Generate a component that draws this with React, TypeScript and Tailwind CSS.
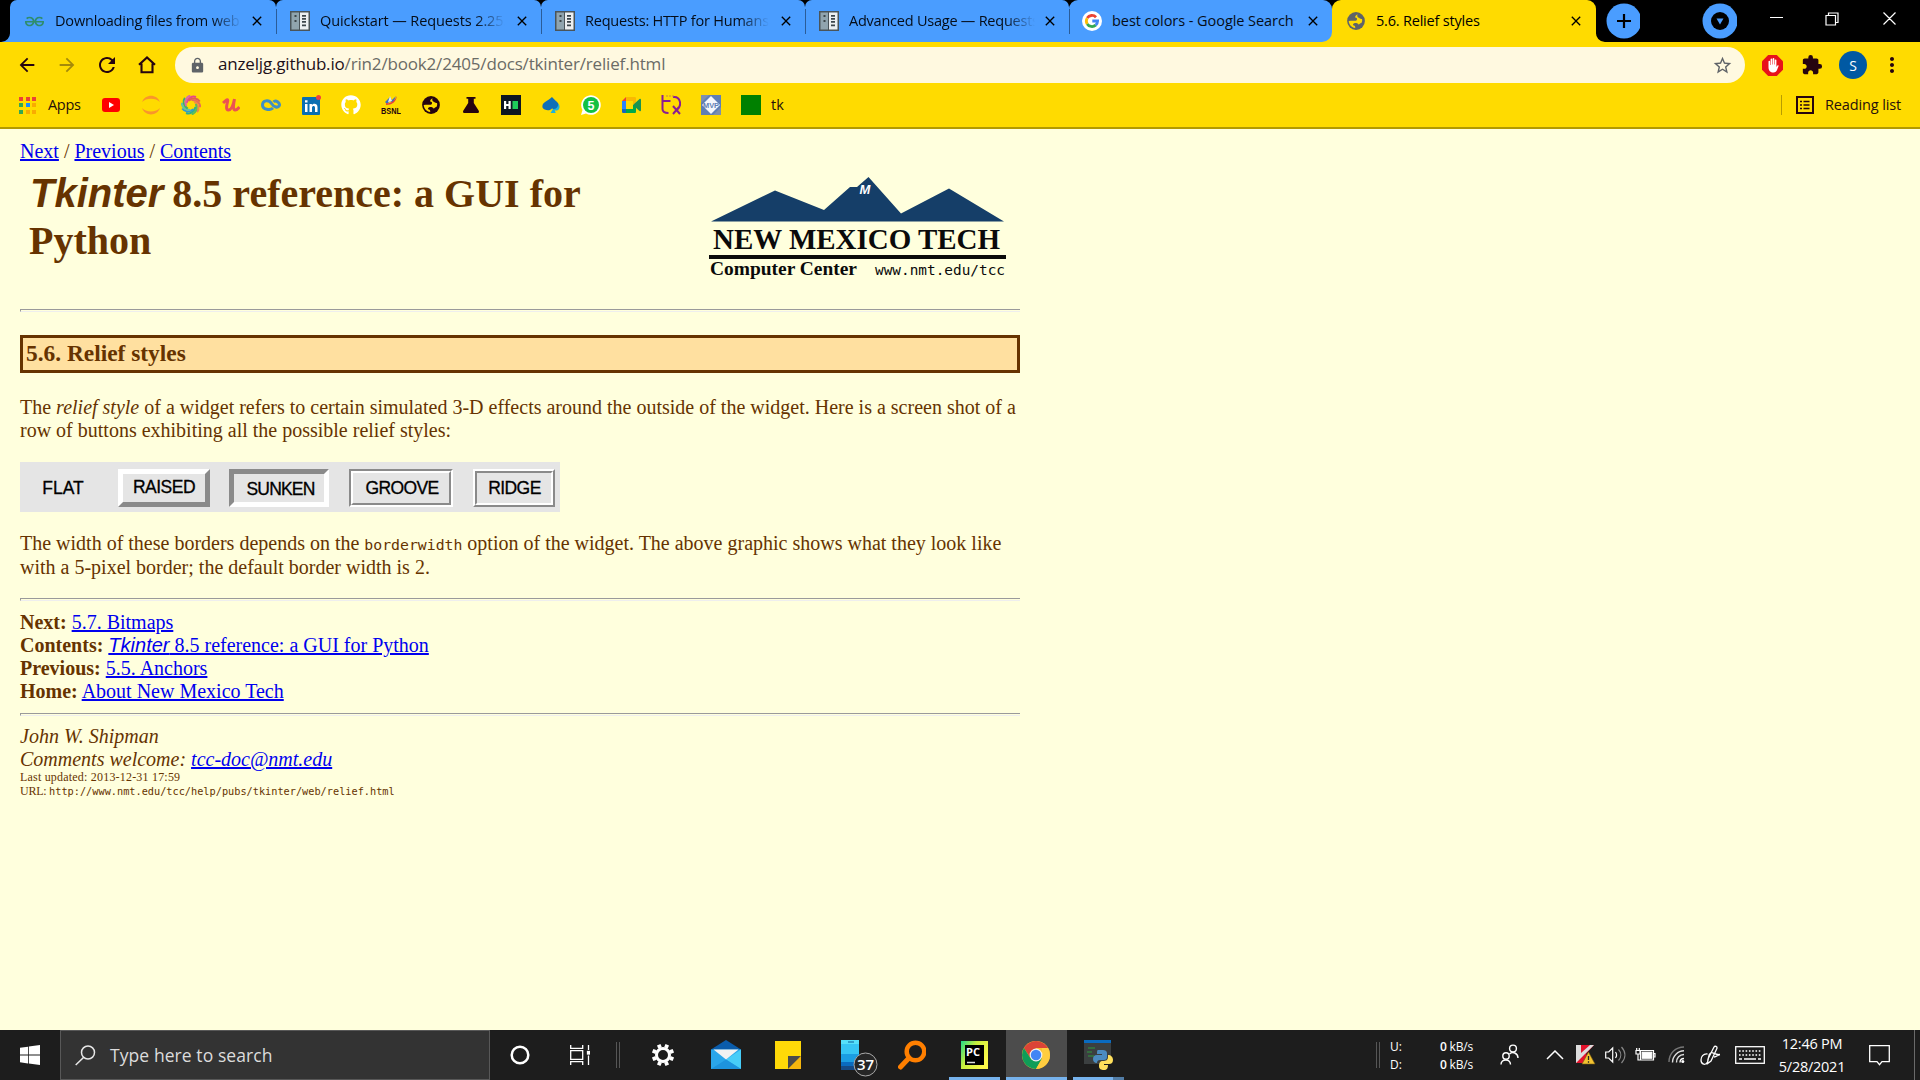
import React from "react";
import { MdArrowBack, MdArrowForward, MdRefresh, MdLock, MdStarBorder, MdExtension, MdMoreVert, MdClose } from "react-icons/md";
import { FaGithub } from "react-icons/fa";
import { SiGeeksforgeeks } from "react-icons/si";

const UI = "font-['Open_Sans','Noto_Sans',sans-serif]";

function DocsIcon() {
  return (
    <svg width="20" height="20" viewBox="0 0 20 20">
      <rect x="0" y="0" width="20" height="20" fill="#4a5459" />
      <rect x="1.5" y="1.5" width="7.5" height="17" fill="#90a4ae" />
      <rect x="10" y="1.5" width="8.5" height="17" fill="#eceff1" />
      <path d="M4.500 4h2v2h-2zM4.500 9h2v2h-2zM12 4h4v1.800h-4zM12 7h4v1.800h-4zM12 10h4v1.800h-4zM12 13.500h4v1.800h-4z" fill="#3c464b" />
    </svg>
  );
}

function GoogleIcon() {
  return (
    <svg width="20" height="20" viewBox="0 0 20 20">
      <circle cx="10" cy="10" r="10" fill="#fff" />
      <g fill="none" strokeWidth="2.800">
        <path d="M14 6.200A5.600 5.600 0 0 0 5.200 7.100" stroke="#ea4335" />
        <path d="M5.200 7.100a5.600 5.600 0 0 0 0 5.800" stroke="#fbbc05" />
        <path d="M5.200 12.900a5.600 5.600 0 0 0 8.500 1.200" stroke="#34a853" />
        <path d="M13.700 14.100A5.600 5.600 0 0 0 15.600 10H10.300" stroke="#4285f4" />
      </g>
    </svg>
  );
}

function Globe({ color }: { color: string }) {
  return (
    <svg width="18" height="18" viewBox="0 0 18 18">
      <circle cx="9" cy="9" r="8.900" fill={color} />
      <path d="M10.500 2.200C9 3 8 4.200 8.200 5.500c1.600 0 2.300 1 1.600 2.400-.8 1-2.600.8-3.800.8-1.500 0-3.200.1-4.300.2.200 3.500 3 6.700 6.500 7 .3-1.700-.7-2.200-2.200-2.600-.2-1.600.7-2.500 2.300-2.400 1.500.1 3.300.3 3.400 1.800.8-.7 1.200-1.800 2.700-1.800.8-1.300 1-2.600.6-4-1.400.3-2.200-.3-3-1.100-1.500-.2-2.200-2-1.500-3.600z" fill="#ffdb00" />
    </svg>
  );
}

const tabs = [
  { w: "w-[266px]", pad: "pl-[15px]", title: "Downloading files from web", tw: "w-[187px]", track: "tracking-[-0.170px]", icon: <SiGeeksforgeeks size={19} color="#2f8d6c" /> },
  { w: "w-[265px]", pad: "pl-[14px]", title: "Quickstart — Requests 2.25.", tw: "w-[185px]", track: "tracking-[-0.100px]", icon: <DocsIcon /> },
  { w: "w-[264px]", pad: "pl-[14px]", title: "Requests: HTTP for Humans™", tw: "w-[184px]", track: "tracking-[-0.200px]", icon: <DocsIcon /> },
  { w: "w-[264px]", pad: "pl-[14px]", title: "Advanced Usage — Requests", tw: "w-[186px]", track: "tracking-[-0.230px]", icon: <DocsIcon /> },
  { w: "w-[263px]", pad: "pl-[13px]", title: "best colors - Google Search", tw: "w-[190px]", track: "tracking-[-0.060px]", icon: <GoogleIcon /> },
];

function TabStrip() {
  return (
    <div className="flex h-[42px] bg-black pl-[10px]">
      {tabs.map((t, i) => (
        <div key={t.title} className={`${t.w} ${i === 4 ? "bg-[#ffdb00]" : "bg-black"} relative h-[42px] shrink-0`}>
          {i === 0 && (
            <svg className="absolute bottom-0 -left-[9px]" width="10" height="10"><path d="M10 0v10H0A9 9 0 0 0 9 0z" fill="#4a9dff" /></svg>
          )}
          {i === 4 && <div className="absolute top-0 left-0 size-[10px] bg-black" />}
          {i === 4 && <div className="absolute top-0 right-0 size-[10px] bg-black" />}
          <div className={`${i === 4 ? "rounded-t-[9px] rounded-br-[10px]" : "rounded-t-[7px]"} ${t.pad} relative flex h-full items-center bg-[#4a9dff]`}>
            {i > 0 && <div className="absolute left-0 top-[9px] h-[25px] w-px bg-[#2a5c98]" />}
            <div className="flex w-[20px] justify-start">{t.icon}</div>
            <div className={`${t.tw} ${t.track} ml-[10px] overflow-hidden whitespace-nowrap text-[14.500px] text-[#050d18] ${i < 4 ? "[mask-image:linear-gradient(to_right,black_84%,transparent)]" : ""}`}>{t.title}</div>
            <MdClose className="absolute right-[11px] text-black" size={16} />
          </div>
        </div>
      ))}
      <div className="relative h-[42px] w-[264px] shrink-0 bg-[#4a9dff]">
        <div className="absolute left-0 top-0 h-[10px] w-full bg-black" />
        <div className="absolute right-0 top-0 h-[10px] w-[10px] bg-black" />
        <div className="relative flex h-full items-center rounded-t-[9px] bg-[#ffdb00] pl-[15px]">
          <Globe color="#5f6368" />
          <div className="ml-[11px] text-[14.500px] tracking-[-0.200px] text-black">5.6. Relief styles</div>
          <MdClose className="absolute right-[12px] text-black" size={16} />
        </div>
        <svg className="absolute bottom-0 -right-[9px]" width="10" height="10"><path d="M0 0v10h10A9 9 0 0 1 1 0z" fill="#ffdb00" /></svg>
      </div>
      <svg className="ml-[10px] mt-[3px]" width="36" height="36"><circle cx="18" cy="18" r="17.500" fill="#4a9dff" /><path d="M18 11v14M11 18h14" stroke="#000" strokeWidth="2.200" /></svg>
      <svg className="ml-[62px] mt-[3px]" width="36" height="36"><circle cx="18" cy="18" r="17.500" fill="#4a9dff" /><circle cx="18" cy="18" r="9" fill="#000" /><path d="M14.500 15.500h7L18 21.500z" fill="#4a9dff" /></svg>
      <svg className="ml-[31px]" width="160" height="42" fill="none" stroke="#fff" strokeWidth="1.200">
        <path d="M2 17.500h13M58 15.500h9.500v9.500H58zM60.500 15.500v-2.500H70v9.500h-2.500M115.500 12.500l12 12M127.500 12.500l-12 12" />
      </svg>
    </div>
  );
}

function Toolbar() {
  return (
    <div className="flex h-[44px] items-center bg-[#ffdb00] pl-[16px] pt-[2px]">
      <div className="flex w-[159px] items-center gap-[18px] text-[#26040f]">
        <MdArrowBack size={22} />
        <MdArrowForward size={22} className="text-[#a58a0a]" />
        <MdRefresh size={24} className="-mx-px" />
        <svg width="22" height="22" fill="none" stroke="#26040f" strokeWidth="2.100"><path d="M3 10.800L11 3.500l8 7.300M5.500 9.500v8.800h11V9.500" /></svg>
      </div>
      <div className="flex h-[36px] w-[1570px] items-center rounded-full bg-[#fff9e0] pl-[14px] pr-[12px]">
        <MdLock size={17} className="text-[#5f6368]" />
        <div className="relative -top-px ml-[12px] flex-1 text-[17px] tracking-[-0.170px] text-[#6b6b66]"><span className="text-[#1d1018]">anzeljg.github.io</span>/rin2/book2/2405/docs/tkinter/relief.html</div>
        <MdStarBorder size={21} className="text-[#5f6368]" />
      </div>
      <div className="flex flex-1 items-center pl-[17px]">
        <svg width="21" height="21" viewBox="0 0 21 21">
          <path d="M6.200 0h8.600L21 6.200v8.600L14.800 21H6.200L0 14.800V6.200z" fill="#e8121a" />
          <path d="M6.500 12V6.500a.8.800 0 0 1 1.600 0V10h.5V4.300a.8.800 0 0 1 1.600 0V9.500h.5V3.800a.8.800 0 0 1 1.600 0v5.700h.5V5.200a.8.800 0 0 1 1.600 0V12l1-1.500c.5-.6 1.400-.2 1.200.5l-1.600 4c-.6 1.500-1.600 2.500-3.500 2.500-3 0-5-1.500-5-5.500z" fill="#fff" />
        </svg>
        <MdExtension size={22} className="ml-[18px] text-[#26040f]" />
        <div className="ml-[16px] flex size-[28px] items-center justify-center rounded-full bg-[#0059a3] text-[14px] text-white">S</div>
        <MdMoreVert size={24} className="ml-[13px] text-[#26040f]" />
      </div>
    </div>
  );
}

const bookmarks: React.ReactNode[] = [
  <svg width="18" height="14"><rect width="18" height="14" rx="3" fill="#f00" /><path d="M7 4l5 3-5 3z" fill="#fff" /></svg>,
  <svg width="20" height="20" fill="#f9952b"><path d="M1 7C4-1.500 16-1.500 19 7 15 2.500 5 2.500 1 7zM1 13c3 8.500 15 8.500 18 0-4 4.500-14 4.500-18 0z" /></svg>,
  <svg width="20" height="20" viewBox="0 0 20 20" fill="none" strokeWidth="2">
    {["#e8458b", "#e0604f", "#e86a5a", "#ef8a4a", "#5bbd5a", "#2fae8c", "#2f9ad0", "#62c3a4", "#3fae6a", "#d86aa8"].map((c, i) => (
      <path key={c} d="M5.500 8C7 3 11 .500 15 2" stroke={c} transform={`rotate(${i * 36} 10 10)`} />
    ))}
  </svg>,
  <svg width="18" height="18" viewBox="0 0 18 18" fill="none" stroke="#ec5252" strokeWidth="3"><path d="M1 7C4 4 6.500 2 5.500 6c-.8 3-2 8 1 8 3.500 0 5-6 6-11-1 5-2 10.500.5 11 1.800.2 3-1 4.500-3" /></svg>,
  <svg width="20" height="12" viewBox="0 0 20 12" fill="none" stroke="#3f8fc4" strokeWidth="3"><path d="M12 9C9.500 11.500 1.500 11 1.500 6S8 .5 10.500 4.500 17 9 18.200 6.800 15 .2 12.500 3" /></svg>,
  <svg width="20" height="20" viewBox="0 0 20 20"><rect x="1" y="2" width="18" height="18" rx="1" fill="#0a6fb3" /><path d="M4 9h2.500v8H4zM4 5.300h2.500v2.200H4zM8.500 9h2.400v1.200c1.600-2.300 5.600-1.600 5.600 1.900V17H14v-4.300c0-2.300-3-2-3 0V17H8.500z" fill="#fff" /><circle cx="17.500" cy="2.500" r="2.500" fill="#f0413c" /></svg>,
  <FaGithub size={20} color="#fff" />,
  <svg width="20" height="22" viewBox="0 0 20 22"><path d="M4 8l5-5 2 3 4-4-3 7-3-2-3 3z" fill="#3b6fc0" /><path d="M5 9c3 1 8-1 11-7-1 6-5 9-11 9z" fill="#e5413c" /><path d="M9 2l2 5-4 1z" fill="#eee" /><text x="0" y="20" textLength="20" lengthAdjust="spacingAndGlyphs" fontFamily="Liberation Sans" fontWeight="700" fontSize="8.500" fill="#26040f">BSNL</text></svg>,
  <Globe color="#26040f" />,
  <svg width="16" height="16" fill="#26040f"><path d="M3.500 0h9v1.800h-1.700V6L15.600 13.500c.8 1.300.2 2.500-1.100 2.500h-13c-1.300 0-1.900-1.200-1.100-2.500L5.200 6V1.800H3.500z" /></svg>,
  <svg width="20" height="20"><rect width="20" height="20" fill="#0e1621" /><path d="M3 6h2.200v3h2.300V6h2.200v8H7.500v-3H5.200v3H3z" fill="#fff" /><path d="M11.500 6H17v8h-5.500z" fill="#1ecb5b" /></svg>,
  <svg width="18" height="18" viewBox="0 0 18 18"><path d="M10 1C12 4 17 6 17 10.500c-1 3-5 3-7 2-2 3-8 2-9.500-1C-.5 6 6 5 10 1z" fill="#0f6fb8" /><path d="M16.500 7.500c2 3 1 6.500-1.500 7-1 .3-1.800 0-2.300-.5l1 3H8.500l2.500-4c2.500.5 5-1.500 5.500-5.500z" fill="#1fb3dd" /></svg>,
  <svg width="20" height="20" viewBox="0 0 20 20"><path d="M0 20l1.500-5A9.800 9.800 0 1 1 5 18.500z" fill="#fff" /><circle cx="10" cy="10" r="8" fill="#12c143" /><text x="10" y="14.500" textAnchor="middle" fontFamily="Liberation Sans" fontWeight="700" fontSize="12.500" fill="#fff">5</text></svg>,
  <svg width="19" height="16" viewBox="0 0 19 16"><path d="M0 4l4-4v4z" fill="#ea4335" /><path d="M4 0h8.500c1 0 1.500.5 1.500 1.500V8l-3-1V4H4z" fill="#fbb900" /><path d="M0 4h4v8H0z" fill="#2a84fc" /><path d="M0 12h4v4H1.500C.5 16 0 15.500 0 14.500z" fill="#1565c0" /><path d="M4 12h7V8h3v6.500c0 1-.5 1.500-1.500 1.500H4z" fill="#00a94b" /><path d="M11 8l6.500-6c.7-.5 1.500-.2 1.500.7v10.600c0 1-.8 1.200-1.500.7z" fill="#1c9350" /></svg>,
  <svg width="20" height="20" viewBox="0 0 20 20" fill="none" stroke="#8a1d93" strokeWidth="2"><path d="M1.500 0v14c0 2.500 2 4 6 4M1.500 6h8M12 2c8-1 9 9 4 13M12 11l7 8M18 12l-6 7" /><path d="M5 1h8" strokeDasharray="2 1" strokeWidth="1.200" stroke="#c98a40" /></svg>,
  <svg width="20" height="20" viewBox="0 0 20 20"><rect width="20" height="20" fill="#5f7fb5" /><path d="M0 0h8L0 8zM20 20h-8l8-8z" fill="#7d8fae" /><path d="M10 1l9 9-9 9-9-9z" fill="#f4f7fc" /><text x="10" y="13" textAnchor="middle" textLength="16" lengthAdjust="spacingAndGlyphs" fontFamily="Liberation Sans" fontWeight="700" fontSize="8" fill="#5f7fb5">MVP</text></svg>,
  <svg width="20" height="20"><rect width="20" height="20" fill="#008000" /></svg>,
];

function BookmarkBar() {
  const dots = ["#ea4335", "#ea4335", "#ea4335", "#34a853", "#1a8cff", "#f9ab00", "#34a853", "#f9ab00", "#f9ab00"];
  return (
    <div className="flex h-[43px] items-center border-b-2 border-[#b39a00] bg-[#ffdb00] pl-[19px] pb-[3px] text-[14.500px] text-[#26100a]">
      <div className="grid grid-cols-3 gap-[2.500px]">
        {dots.map((c, i) => <div key={i} className="size-[4px]" style={{ backgroundColor: c }} />)}
      </div>
      <div className="ml-[12px] w-[43px] tracking-[-0.300px]">Apps</div>
      {bookmarks.map((b, i) => <div key={i} className="flex w-[40px] shrink-0 justify-center">{b}</div>)}
      <div className="">tk</div>
      <div className="ml-auto h-[20px] w-px bg-[#b89d00]" />
      <svg className="ml-[14px]" width="18" height="18" fill="none" stroke="#26040f"><rect x="1" y="1" width="16" height="16" strokeWidth="2" /><path d="M4 5.500h2M7.500 5.500h6M4 9h2M7.500 9h6M4 12.500h2M7.500 12.500h6" strokeWidth="1.600" /></svg>
      <div className="ml-[11px] w-[95px] tracking-[-0.120px]">Reading list</div>
    </div>
  );
}

function Link({ children }: { children: React.ReactNode }) {
  return <a className="text-[#0000ee] underline">{children}</a>;
}

function Rule() {
  return <div className="h-[3px] border-t border-b border-l border-t-[#9a9a9a] border-b-[#eeeeee] border-l-[#9a9a9a]" />;
}

function NmtLogo() {
  return (
    <svg width="300" height="110" viewBox="0 0 300 110" className="shrink-0">
      <path d="M2 45.500L66 14.500 115 34 141 11h7l11.500-10L192 37.500 240 12.500 295 45.500z" fill="#153e68" />
      <text x="150.500" y="17.500" fontFamily="Liberation Sans" fontStyle="italic" fontWeight="700" fontSize="13" fill="#fff">M</text>
      <g fill="#0a0a0a">
        <text x="4" y="72.500" textLength="287" lengthAdjust="spacingAndGlyphs" fontFamily="Liberation Serif" fontWeight="700" fontSize="30">NEW MEXICO TECH</text>
        <rect x="0" y="79" width="297" height="4" />
        <text x="1" y="98.500" textLength="147" lengthAdjust="spacingAndGlyphs" fontFamily="Liberation Serif" fontWeight="700" fontSize="18.500">Computer Center</text>
        <text x="166" y="98.500" textLength="130" lengthAdjust="spacingAndGlyphs" fontFamily="DejaVu Sans Mono" fontSize="14.500">www.nmt.edu/tcc</text>
      </g>
    </svg>
  );
}

function ReliefStrip() {
  return (
    <div className="flex h-[50px] w-[540px] bg-[#e5e5e5] pt-[7px] font-['Liberation_Sans',sans-serif] text-[17.500px] text-black [-webkit-text-stroke:0.3px_black]">
      <div className="flex h-[38px] w-[86px] items-center justify-center">FLAT</div>
      <div className="ml-[12px] flex h-[38px] w-[92px] items-center justify-center border-[5px] border-b-[#8a8a8a] border-l-white border-r-[#8a8a8a] border-t-white pb-[2px] tracking-[-0.500px]">RAISED</div>
      <div className="ml-[19px] flex h-[38px] w-[100px] items-center justify-center border-[5px] border-b-white border-l-[#8a8a8a] border-r-white border-t-[#8a8a8a] pl-[3px] pt-[2px] tracking-[-0.800px]">SUNKEN</div>
      <div className="ml-[20px] h-[38px] w-[104px] border-2 border-b-white border-l-[#8a8a8a] border-r-white border-t-[#8a8a8a]">
        <div className="flex h-full items-center justify-center border-2 border-b-[#8a8a8a] border-l-white border-r-[#8a8a8a] border-t-white pl-[2px] tracking-[-0.600px]">GROOVE</div>
      </div>
      <div className="ml-[20px] h-[38px] w-[82px] border-2 border-b-[#8a8a8a] border-l-white border-r-[#8a8a8a] border-t-white">
        <div className="flex h-full items-center justify-center border-2 border-b-white border-l-[#8a8a8a] border-r-white border-t-[#8a8a8a] pl-px tracking-[-0.600px]">RIDGE</div>
      </div>
    </div>
  );
}

function Article() {
  return (
    <div className="h-[901px] bg-[#ffffdd] pl-[20px] pt-[11px] font-['Liberation_Serif',serif] text-[20px] leading-[23px] text-[#663300]">
      <div className="w-[1000px]">
        <div><Link>Next</Link> / <Link>Previous</Link> / <Link>Contents</Link></div>
        <div className="flex h-[146px] justify-between pl-[9px] pr-[11px]">
          <h1 className="w-[620px] pt-[7px] text-[40px] font-bold leading-[47px]"><span className="pl-px font-['Liberation_Sans',sans-serif] italic">Tkinter</span><span className="-ml-px"> 8.5 reference: a GUI for Python</span></h1>
          <div className="pt-[13px]"><NmtLogo /></div>
        </div>
        <Rule />
        <h2 className="mt-[23px] flex h-[38px] items-center border-[3px] border-[#663300] bg-[#ffe0a0] pb-[2px] pl-[3px] text-[23.400px] font-bold">5.6. Relief styles</h2>
        <p className="mt-[23px]">The <i>relief style</i> of a widget refers to certain simulated 3-D effects around the outside of the widget. Here is a screen shot of a row of buttons exhibiting all the possible relief styles:</p>
        <div className="mt-[20px]"><ReliefStrip /></div>
        <p className="mt-[20px]">The width of these borders depends on the <span className="font-['DejaVu_Sans_Mono',monospace] text-[14.800px]">borderwidth</span> option of the widget. The above graphic shows what they look like with a 5-pixel border; the default border width is 2.</p>
        <div className="mt-[19px]"><Rule /></div>
        <div className="mt-[10px]">
          <div><b>Next:</b> <Link>5.7. Bitmaps</Link></div>
          <div><b>Contents:</b> <Link><span className="font-['Liberation_Sans',sans-serif] italic">Tkinter</span> 8.5 reference: a GUI for Python</Link></div>
          <div><b>Previous:</b> <Link>5.5. Anchors</Link></div>
          <div><b>Home:</b> <Link>About New Mexico Tech</Link></div>
        </div>
        <div className="mt-[10px]"><Rule /></div>
        <div className="mt-[9px] italic">
          <div>John W. Shipman</div>
          <div>Comments welcome: <Link>tcc-doc@nmt.edu</Link></div>
        </div>
        <div className="-mt-px text-[12px] leading-[14px]">
          <div className="tracking-[0.200px]">Last updated: 2013-12-31 17:59</div>
          <div><span className="tracking-[-0.250px]">URL: </span><span className="font-['DejaVu_Sans_Mono',monospace] text-[10.250px]">http://www.nmt.edu/tcc/help/pubs/tkinter/web/relief.html</span></div>
        </div>
      </div>
    </div>
  );
}

function TaskButton({ w, line, active, children }: { w: string; line?: string; active?: boolean; children: React.ReactNode }) {
  return (
    <div className={`${w} ${active ? "bg-[#4c4c4c]" : ""} relative flex h-[50px] shrink-0 items-center justify-center`}>
      {children}
      {line && <div className={`${line} absolute bottom-0 h-[3px] bg-[#76b2ec]`} />}
    </div>
  );
}

function Taskbar() {
  return (
    <div className="flex h-[50px] items-center bg-[#1d1d1d] text-white">
      <div className="flex w-[60px] justify-center">
        <svg width="20" height="20" viewBox="0 0 20 20" fill="#fff"><path d="M0 2.800L8 1.700V9.600H0zM8.800 1.600L20 0v9.600H8.800zM0 10.400h8v8L0 17.300zM8.800 10.400H20V20L8.800 18.500z" /></svg>
      </div>
      <div className="flex h-[50px] w-[430px] items-center border border-[#585858] bg-[#333333] pl-[14px]">
        <svg width="21" height="21" fill="none" stroke="#e8e8e8" strokeWidth="1.500"><circle cx="13" cy="7.500" r="6.500" /><path d="M8.500 12.500L.7 20" /></svg>
        <span className="ml-[14px] text-[17.500px] tracking-[0.080px] text-[#dcdcdc]">Type here to search</span>
      </div>
      <TaskButton w="w-[60px]"><svg width="20" height="20" fill="none" stroke="#fff" strokeWidth="2.500"><circle cx="10" cy="10" r="8.300" /></svg></TaskButton>
      <TaskButton w="w-[60px]">
        <svg width="20" height="20" fill="none" stroke="#fff" strokeWidth="1.300"><path d="M.7 0v3.300h12V0M.7 20v-3.300h12V20M.7 5.700h12v8.600H.7zM18.500 0v5M18.500 10.500V20" /><rect x="17.500" y="6.500" width="2" height="2.500" fill="#fff" /></svg>
      </TaskButton>
      <div className="ml-[6px] h-[26px] w-[4px] border-x border-[#565656]" />
      <TaskButton w="w-[85px]">
        <svg width="24" height="24" viewBox="0 0 24 24" fill="none" stroke="#fff"><circle cx="12" cy="12" r="6.500" strokeWidth="3" />{[0, 45, 90, 135, 180, 225, 270, 315].map(a => <path key={a} d="M12 4.500V.8" strokeWidth="3.800" transform={`rotate(${a + 22.500} 12 12)`} />)}</svg>
      </TaskButton>
      <TaskButton w="w-[42px]">
        <svg width="30" height="30" viewBox="0 0 30 30"><path d="M0 9.500L15 0l15 9.500v5H0z" fill="#0a5cab" /><path d="M0 9.500h30V29H0z" fill="#2aa6ea" /><path d="M30 9.500V29L15 19.500z" fill="#47cdf8" /><path d="M2.500 9.500h25L15 19.500z" fill="#f2f2f2" /><path d="M0 29l8-5 7-4.500L30 29z" fill="#1d93dd" /></svg>
      </TaskButton>
      <TaskButton w="w-[82px]">
        <svg width="26" height="28"><path d="M0 0h26v15L13 28H0z" fill="#ffd908" /><path d="M13 15h13L13 28z" fill="#4a4a4a" /><path d="M26 15v13H13z" fill="#f5b50e" /></svg>
      </TaskButton>
      <TaskButton w="w-[60px]">
        <svg className="ml-[4px] shrink-0 overflow-visible" width="40" height="36" viewBox="0 0 40 36">
          <path d="M0 3h18v30H0z" fill="#36c5f4" /><path d="M0 3h18v4H0z" fill="#56e0fa" /><path d="M0 17h18v8H0z" fill="#1b9de2" /><path d="M0 25h18v4H0z" fill="#0a6bc0" /><path d="M0 29h18v4H0z" fill="#154a86" /><path d="M7 5h6" stroke="#0a5c9a" />
          <circle cx="24.500" cy="27.500" r="11.500" fill="#262626" stroke="#aaa" /><text x="24.500" y="33" textAnchor="middle" fontFamily="Open Sans" fontWeight="600" fontSize="15" fill="#fff">37</text>
        </svg>
      </TaskButton>
      <TaskButton w="w-[60px]">
        <svg className="-ml-[15px]" width="28" height="30" fill="none" stroke="#ff7f00"><circle cx="17.500" cy="11.500" r="8.800" strokeWidth="4.500" /><path d="M11 18L2.500 27" strokeWidth="5" strokeLinecap="round" /></svg>
      </TaskButton>
      <TaskButton w="w-[51px]" line="inset-x-0">
        <svg width="27" height="28" viewBox="0 0 27 28"><defs><linearGradient id="pc" x1="0" y1="0" x2="1" y2="0.600"><stop offset="0" stopColor="#21d789" /><stop offset=".45" stopColor="#c9f03d" /><stop offset="1" stopColor="#fcf84a" /></linearGradient></defs><rect width="27" height="28" fill="url(#pc)" /><rect x="4" y="4" width="19" height="20" fill="#000" /><text x="5" y="14.500" fontFamily="Open Sans" fontWeight="700" fontSize="10.500" textLength="14" lengthAdjust="spacingAndGlyphs" fill="#fff">PC</text><path d="M6 21.500h8" stroke="#ddd" strokeWidth="1.500" /></svg>
      </TaskButton>
      <div className="w-[6px]" />
      <TaskButton w="w-[61px]" line="inset-x-0" active>
        <svg className="-ml-[2px]" width="28" height="28" viewBox="-14 -14 28 28"><circle r="14" fill="#fbc02d" /><path d="M-12.100-7A14 14 0 0 1 12.100-7H0L-5.500 3z" fill="#db4437" /><path d="M-12.100-7A14 14 0 0 0 0 14L6 3.500-5.500 3.200z" fill="#0f9d58" /><path d="M12.100-7A14 14 0 0 1 0 14L6 3.500V-7z" fill="#ffcd40" /><circle r="6.400" fill="#f1f1f1" /><circle r="5.200" fill="#4285f4" /></svg>
      </TaskButton>
      <div className="w-[6px]" />
      <TaskButton w="w-[51px]" line="left-0 w-[40px]">
        <svg width="29" height="30" viewBox="0 0 29 30" className="overflow-visible"><rect y="0" width="27" height="24" fill="#3b3f40" /><rect width="27" height="3" fill="#0a6bc0" /><path d="M4 8h7M3 12h5M4 16h6" stroke="#2f9a3a" strokeWidth="1.200" /><path d="M14 10h5c2 0 4 1 4 3v4c0 2-1 3-3 3h-4c-2 0-3 1-3 3-3 0-4-2-4-4s1-4 4-4h5v-1h-5c0-2 0-4 1-4z" fill="#4b8bc0" /><path d="M24 15c3 0 5 2 5 5s-2 4-4 4h-5v1h4c0 3-1 5-4 5s-5-1-5-4c0-3 1-5 4-5s5-1 5-4z" fill="#ffe05c" /></svg>
        <div className="absolute bottom-0 right-0 h-[3px] w-[11px] bg-[#527da6]" />
      </TaskButton>
      <div className="ml-auto h-[26px] w-[4px] border-x border-[#565656]" />
      <div className="ml-[10px] grid w-[83px] grid-cols-[38px_1fr] pt-[2px] text-[12px] leading-[18px]">
        <span>U:</span><span className="text-right tracking-[-0.200px]"><b className="font-semibold">0</b> kB/s</span>
        <span>D:</span><span className="text-right tracking-[-0.200px]"><b className="font-semibold">0</b> kB/s</span>
      </div>
      <svg className="ml-[27px]" width="20" height="22" fill="none" stroke="#fff" strokeWidth="1.400"><circle cx="13" cy="4.500" r="3.400" /><circle cx="6" cy="12" r="3.200" /><path d="M1 20.500c0-6 9.500-6 9.500 0M9.500 10c3-3 8.500-1 8.500 4" /></svg>
      <svg className="ml-[26px]" width="18" height="10" fill="none" stroke="#fff" strokeWidth="1.500"><path d="M1 9l8-8 8 8" /></svg>
      <svg className="ml-[12px]" width="20" height="20" viewBox="0 0 20 20"><path d="M0 0h18L10 9l8 9H0z" fill="#e3132c" /><path d="M0 0h5v8L14 0h4L9 9 0 18z" fill="#ddd" /><path d="M12.500 7L19 19H6z" fill="#f3c331" stroke="#7a5d10" strokeWidth=".6" /><path d="M12.500 11v4M12.500 16.200v1.500" stroke="#222" strokeWidth="1.300" /></svg>
      <svg className="ml-[9px]" width="22" height="20" fill="none" stroke="#fff" strokeWidth="1.200"><path d="M.7 7h3l4-4v14l-4-4h-3zM10.500 7c1.300 1.800 1.300 4.200 0 6" /><path d="M13.500 4.500c3 3.300 3 7.700 0 11M16.500 2c4.500 5 4.500 11 0 16" stroke="#888" /></svg>
      <svg className="ml-[8px]" width="21" height="16" fill="none" stroke="#fff" strokeWidth="1.200"><path d="M5.500 3.500h13v9.500h-13zM18.500 6.500h1.500v3.500h-1.500M3 7v6h3M1 3.500h4V7H1zM1.700 3.500V1M4.300 3.500V1" /><rect x="7.200" y="5.200" width="9.600" height="6" fill="#fff" /></svg>
      <svg className="ml-[12px]" width="18" height="18" fill="none" strokeWidth="1.400"><path d="M1 16C1 7.500 7.500 1 16 1" stroke="#777" /><path d="M4.500 16.500C4.500 10 10 4.800 16 4.800M8.500 16.500c0-4.500 3-8 7.500-8" stroke="#ddd" /><path d="M12 16.500c0-2.500 1.500-4 4-4" stroke="#fff" /><circle cx="14.800" cy="15.500" r="1.500" fill="#fff" /></svg>
      <svg className="ml-[14px]" width="21" height="21" fill="none" stroke="#fff" strokeWidth="1.300"><path d="M8 14L14 2c1-1.500 3.500-.5 3 1.300L11 16l-3.500 2.500zM7.500 9C3 8.500 1 12 1 15c0 5 5 5.500 6.500 2 1.500-4 .5-7.500 3-9s4 2 9.500 1.500M14 12c3 0 3-2 6-2.500" /></svg>
      <svg className="ml-[14px]" width="30" height="18" fill="none" stroke="#fff" strokeWidth="1.300"><rect x=".7" y=".7" width="28.600" height="16.600" /><path d="M4 5h22M4 9h22" strokeDasharray="1.600 1.700" strokeWidth="1.600" /><path d="M4 13h3M9 13h12M23 13h3" strokeWidth="1.600" /></svg>
      <div className="ml-[8px] w-[78px] text-center text-[14.500px] leading-[23px] tracking-[-0.250px]"><div>12:46 PM</div><div>5/28/2021</div></div>
      <svg className="ml-[18px]" width="21" height="21" fill="none" stroke="#fff" strokeWidth="1.300"><path d="M.7.700h19.600v16H13l-2.500 3-2.500-3H.7z" /></svg>
      <div className="ml-[24px] mr-[5px] h-[50px] w-px bg-[#6a6a6a]" />
    </div>
  );
}

export default function App() {
  return (
    <div className={`${UI} h-[1080px] w-[1920px] overflow-hidden bg-[#ffffdd]`}>
      <TabStrip />
      <Toolbar />
      <BookmarkBar />
      <Article />
      <Taskbar />
    </div>
  );
}
